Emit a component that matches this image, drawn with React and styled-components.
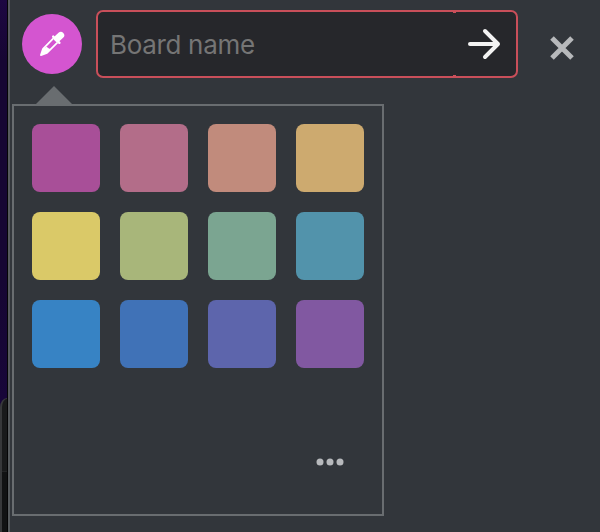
import React from "react";
import styled, { createGlobalStyle } from "styled-components";

const GlobalStyle = createGlobalStyle`
  * { box-sizing: border-box; }
  body { margin: 0; background: #32363b; overflow: hidden; }
`;

const Screen = styled.div`
  display: flex;
  width: 600px;
  height: 532px;
  overflow: hidden;
  font-family: Inter, Roboto, sans-serif;
`;

const Backdrop = styled.div`
  flex: 0 0 8px;
  display: flex;
  flex-direction: column;
  justify-content: flex-end;
  background: linear-gradient(to bottom, #1d0842 0, #160633 60px, #160633 280px, #1a0640 100%);
  border-right: 1px solid #050506;
`;

const BackdropWindow = styled.div`
  height: 134px;
  background: linear-gradient(to bottom, #191a1b 0 72px, #232425 72px 73px, #111213 73px);
  border-left: 2px solid #37383a;
  border-top: 1px solid #37383a;
  border-top-left-radius: 12px 16px;
`;

const Panel = styled.main`
  flex: 1;
  border-left: 2px solid #565a5d;
  background: #32363b;
`;

const Header = styled.header`
  display: flex;
  align-items: flex-start;
  height: 86px;
  padding: 10px 0 0 12px;
`;

const ColorButton = styled.button`
  display: grid;
  place-items: center;
  width: 60px;
  height: 60px;
  margin: 4px 14px 0 0;
  padding: 0;
  border: 0;
  border-radius: 50%;
  background: #d455d0;
`;

const NameField = styled.div`
  display: flex;
  width: 422px;
  height: 68px;
  border: 2px solid #c94f5a;
  border-radius: 7px;
  background: linear-gradient(#c94f5a, #c94f5a) 355px 0 / 3px 1px no-repeat,
    linear-gradient(#c94f5a, #c94f5a) 355px 100% / 3px 1px no-repeat, #26272b;
`;

const NameInput = styled.input`
  width: 354px;
  padding: 0 0 0 12px;
  border: 0;
  outline: 0;
  background: transparent;
  font: 400 26px Inter, Roboto, sans-serif;
  letter-spacing: -0.32px;
  color: #eee;
  &::placeholder { color: #757575; opacity: 1; }
`;

const IconButton = styled.button`
  display: grid;
  place-items: center;
  width: ${(p) => p.$width}px;
  height: ${(p) => p.$height}px;
  margin: ${(p) => p.$margin || 0};
  padding: 0;
  border: 0;
  background: transparent;
  color: ${(p) => p.$color};
`;

const Popover = styled.section`
  width: 372px;
  margin-left: 2px;
`;

const Caret = styled.div`
  width: 36px;
  height: 18px;
  margin-left: 24px;
  background: #696d70;
  clip-path: polygon(50% 0, 100% 100%, 0 100%);
`;

const Palette = styled.div`
  display: flex;
  flex-direction: column;
  justify-content: space-between;
  height: 412px;
  padding: 18px;
  border: 2px solid #696d70;
`;

const Swatches = styled.div`
  display: grid;
  grid-template-columns: repeat(4, 68px);
  grid-auto-rows: 68px;
  gap: 20px;
`;

const Swatch = styled.button`
  border: 0;
  border-radius: 8px;
  background: ${(p) => p.$color};
`;

const MoreRow = styled.div`
  display: flex;
  justify-content: flex-end;
`;

const colors = [
  "#a84f98", "#b36d89", "#c18b7c", "#cdaa6f",
  "#dac968", "#a8b67a", "#7ba591", "#5293ab",
  "#3783c4", "#4072b7", "#5d65ac", "#8158a1",
];

export default function App() {
  return (
    <>
      <GlobalStyle />
      <Screen>
        <Backdrop><BackdropWindow /></Backdrop>
        <Panel>
          <Header>
            <ColorButton aria-label="Pick color">
              <svg width="32" height="32" viewBox="0 0 32 32" fill="none">
                <path d="M17.6 10.2 7 20.8 4.9 27.1 11 24.9 21.6 14.3" stroke="#fff" strokeWidth="1.7" strokeLinejoin="round" />
                <path d="M7 20.8 10.5 18.8 12.5 20.2 14.6 21.3 11 24.9 4.9 27.1Z" fill="#fff" />
                <path d="m17.2 8.6 6.2 6.2" stroke="#fff" strokeWidth="2.4" strokeLinecap="round" />
                <path d="m21.3 10.5 3.5-3.2" stroke="#fff" strokeWidth="6.8" strokeLinecap="round" />
              </svg>
            </ColorButton>
            <NameField>
              <NameInput placeholder="Board name" aria-label="Board name" />
              <IconButton $width={64} $height={64} $color="#f3f3f3" aria-label="Create board">
                <svg width="36" height="36" viewBox="0 0 36 36" fill="none" stroke="currentColor" strokeWidth="4" strokeLinecap="round" strokeLinejoin="round">
                  <path d="M4 18h28M19 5l13 13-13 13" />
                </svg>
              </IconButton>
            </NameField>
            <IconButton $width={28} $height={28} $margin="24px 0 0 30px" $color="#b7b9bb" aria-label="Close">
              <svg width="28" height="28" viewBox="0 0 28 28" fill="none" stroke="currentColor" strokeWidth="5">
                <path d="m4 4 20 20M24 4 4 24" />
              </svg>
            </IconButton>
          </Header>
          <Popover>
            <Caret />
            <Palette>
              <Swatches>
                {colors.map((c) => <Swatch key={c} $color={c} aria-label={c} />)}
              </Swatches>
              <MoreRow>
                <IconButton $width={68} $height={68} $color="#b7b9bc" aria-label="More colors">
                  <svg width="28" height="8" viewBox="0 0 28 8" fill="currentColor">
                    <circle cx="4" cy="4" r="3.5" />
                    <circle cx="14" cy="4" r="3.5" />
                    <circle cx="24" cy="4" r="3.5" />
                  </svg>
                </IconButton>
              </MoreRow>
            </Palette>
          </Popover>
        </Panel>
      </Screen>
    </>
  );
}
